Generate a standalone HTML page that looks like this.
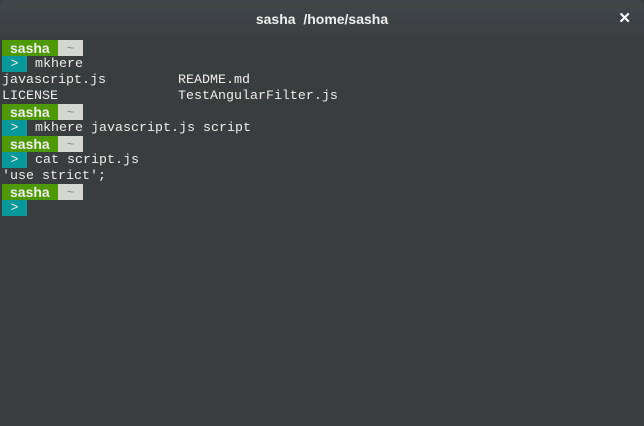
<!DOCTYPE html>
<html><head><style>
html,body{margin:0;padding:0;width:644px;height:426px;overflow:hidden;background:#383d3d}
.title{position:absolute;left:0;top:0;width:644px;height:37px;background:linear-gradient(#404748,#3a4040);color:#eeeeec;font:bold 14px "Liberation Sans",sans-serif;text-align:center;line-height:38px;border-radius:6px 6px 0 0;white-space:pre}
.x{position:absolute;right:13px;top:0;font-size:15px;color:#fff}
.term{position:absolute;left:2px;top:40px;font:13.33px/17px "Liberation Mono",monospace;color:#eeeeec}
.l{height:16px;white-space:pre;overflow:hidden}
.l span{display:inline-block;height:16px;vertical-align:top}
.g{background:#4e9a06;color:#eeeeec;font-weight:bold;width:56px;font-family:"Liberation Sans",sans-serif;font-size:14px;box-sizing:border-box;padding-left:8px}
.t{background:#d3d7cf;color:#888a85;width:25px;text-align:center;line-height:20px}
.p{background:#06989a;color:#eeeeec;width:25px;text-align:center}
</style></head><body>
<div class="title">sasha  /home/sasha<span class="x">✕</span></div>
<div class="term">
<div class="l"><span class="g">sasha</span><span class="t">~</span></div>
<div class="l"><span class="p">&gt;</span> mkhere</div>
<div class="l">javascript.js         README.md</div>
<div class="l">LICENSE               TestAngularFilter.js</div>
<div class="l"><span class="g">sasha</span><span class="t">~</span></div>
<div class="l"><span class="p">&gt;</span> mkhere javascript.js script</div>
<div class="l"><span class="g">sasha</span><span class="t">~</span></div>
<div class="l"><span class="p">&gt;</span> cat script.js</div>
<div class="l">'use strict';</div>
<div class="l"><span class="g">sasha</span><span class="t">~</span></div>
<div class="l"><span class="p">&gt;</span></div>
</div>
</body></html>
